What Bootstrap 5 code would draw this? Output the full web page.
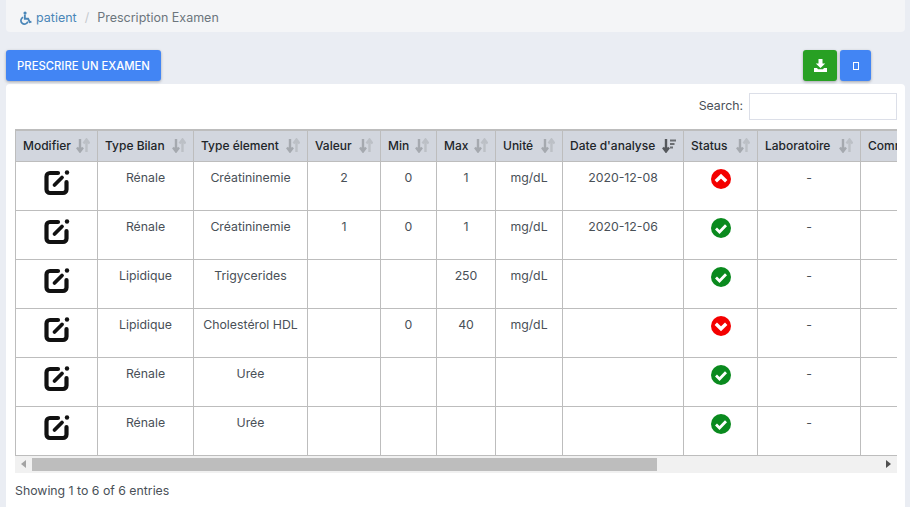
<!DOCTYPE html>
<html lang="fr">
<head>
  <meta charset="UTF-8">
  <meta name="viewport" content="width=device-width, initial-scale=1">
  <title>Prescription Examen</title>
  <link rel="stylesheet" href="https://cdn.jsdelivr.net/npm/bootstrap@5.3.0/dist/css/bootstrap.min.css">
  <style>
    html, body { height: 507px; overflow: hidden; }
    body {
      font-family: "Inter", "Liberation Sans", sans-serif;
      font-size: 12.3px;
      color: #495057;
      background-color: #eaedf3;
      padding: 0 5px 0 6px;
    }
    .crumbs {
      background-color: #f4f5f7;
      height: 32px;
      border-radius: 0 0 4px 4px;
      padding: 4px 13px 0;
      margin: 0 0 18px 0;
      font-size: 12.5px;
      align-items: center;
    }
    .crumbs .breadcrumb-item a { color: #4a86b8; text-decoration: none; }
    .crumbs .breadcrumb-item.active { color: #6c757d; }
    .crumbs .breadcrumb-item + .breadcrumb-item::before { color: #c5c9ce; }
    .tools { height: 34px; padding-right: 34px; }
    .tool-btn {
      height: 31px;
      border: 0;
      border-radius: 3px;
      font-size: 11.3px;
      font-weight: 500;
      color: #fff;
      box-shadow: 0 1px 3px rgba(0,0,0,.3);
      display: flex;
      align-items: center;
      justify-content: center;
    }
    .btn-prescrire { width: 155px; background-color: #4285f4; margin-right: auto; padding: 1px 0 0; }
    .btn-dl { width: 34px; background-color: #28a023; margin-right: 3px; padding: 0; }
    .btn-blank { width: 31px; background-color: #4285f4; padding: 0; }
    .panel {
      background-color: #fff;
      border-radius: 4px 4px 0 0;
      height: 423px;
      padding: 9px 8px 0 9px;
    }
    .search-row { margin-bottom: 9px; }
    .search-row label { color: #495057; margin-right: 6px; }
    .search-row input {
      width: 148px;
      height: 27px;
      border: 1px solid #dcdfe8;
      outline: 0;
    }
    .scroll-wrap { overflow: hidden; width: 882px; }
    .exam-table {
      table-layout: fixed;
      width: 960px;
      border-collapse: collapse;
      margin: 0;
    }
    .exam-table th, .exam-table td {
      border: 1px solid #bdbdbd;
      text-align: center;
      vertical-align: top;
      padding: 0;
      white-space: nowrap;
      overflow: hidden;
    }
    .exam-table thead th {
      height: 31px;
      background-color: #d2d6de;
      color: #212529;
      font-weight: 500;
      font-size: 12px;
      vertical-align: middle;
      text-align: left;
      padding-left: 7px;
      border-top: 2px solid #bdbdbd;
    }
    .exam-table tbody td { height: 49px; padding-top: 7px; color: #495057; }
    .exam-table .cell-edit { padding-top: 6px; }
    .exam-table .cell-status { padding-top: 7px; }
    .head-inner { display: flex; align-items: center; justify-content: space-between; padding-right: 7px; }
    .c1 { width: 82px; } .c2 { width: 96px; } .c3 { width: 114px; } .c4 { width: 73px; }
    .c5 { width: 56px; } .c6 { width: 59px; } .c7 { width: 67px; } .c8 { width: 121px; }
    .c9 { width: 74px; } .c10 { width: 103px; } .c11 { width: 115px; }
    .fake-scroll { height: 17px; background-color: #f1f1f1; width: 882px; }
    .arrow-l, .arrow-r { width: 17px; height: 17px; flex: none; display: flex; align-items: center; justify-content: center; }
    .thumb { width: 625px; height: 13px; background-color: #bdbdbd; }
    .info { margin-top: 9px; color: #495057; }
  </style>
</head>
<body>
  <svg width="0" height="0" class="d-none">
    <symbol id="ic-edit" viewBox="0 0 28 28">
      <path d="M15 5H7a3.500 3.500 0 0 0-3.500 3.500v13A3.500 3.500 0 0 0 7 25h13a3.500 3.500 0 0 0 3.500-3.500V14" fill="none" stroke="#111" stroke-width="4.200" stroke-linecap="round"/>
      <path d="M11.500 17 19 9.500" fill="none" stroke="#111" stroke-width="3.800" stroke-linecap="round"/>
      <circle cx="24" cy="4.500" r="2.200" fill="#111"/>
    </symbol>
    <symbol id="ic-ok" viewBox="0 0 20 20">
      <circle cx="10" cy="10" r="10" fill="#0a8a1e"/>
      <path d="M5 10.500l3.500 3.500L15 7.200" fill="none" stroke="#fff" stroke-width="2.800"/>
    </symbol>
    <symbol id="ic-up" viewBox="0 0 20 20">
      <circle cx="10" cy="10" r="10" fill="#f40000"/>
      <path d="M4.800 12.200 10 7.200l5.200 5" fill="none" stroke="#fff" stroke-width="3.400"/>
    </symbol>
    <symbol id="ic-down" viewBox="0 0 20 20">
      <circle cx="10" cy="10" r="10" fill="#f40000"/>
      <path d="M4.800 7.800 10 12.800l5.200-5" fill="none" stroke="#fff" stroke-width="3.400"/>
    </symbol>
    <symbol id="ic-sort" viewBox="0 0 14 15">
      <path d="M4 1v12M1 9.500 4 13.500 7 9.500" fill="none" stroke="#a5a9af" stroke-width="2.400"/>
      <path d="M10.500 14V2M7.500 5.500 10.500 1.500 13.500 5.500" fill="none" stroke="#bcc0c6" stroke-width="2.400"/>
    </symbol>
    <symbol id="ic-sort-desc" viewBox="0 0 14 15">
      <path d="M4 1v12M1 9.500 4 13.500 7 9.500" fill="none" stroke="#55585c" stroke-width="2.400"/>
      <path d="M8 2.500h6M8 6h4.500M8 9.500h3" fill="none" stroke="#6b6e72" stroke-width="2"/>
    </symbol>
  </svg>

  <nav aria-label="breadcrumb">
    <ol class="breadcrumb crumbs">
      <li class="breadcrumb-item d-flex align-items-center gap-1">
        <svg width="13" height="14" viewBox="0 0 14 14"><circle cx="6.500" cy="1.700" r="1.700" fill="#4a86b8"/><path d="M6.300 3.500v4.300h3.500l1.800 3.700 1.800-.6" fill="none" stroke="#4a86b8" stroke-width="2"/><path d="M4.500 6.200a3.800 3.800 0 1 0 5 4.700" fill="none" stroke="#4a86b8" stroke-width="1.800"/></svg>
        <a href="#">patient</a>
      </li>
      <li class="breadcrumb-item active" aria-current="page">Prescription Examen</li>
    </ol>
  </nav>

  <div class="d-flex tools">
    <button class="btn tool-btn btn-prescrire" type="button">PRESCRIRE UN EXAMEN</button>
    <button class="btn tool-btn btn-dl" type="button" aria-label="Télécharger">
      <svg width="13" height="13" viewBox="0 0 13 13"><path d="M4.500 0h4v4.500h2.700L6.500 9 1.800 4.500h2.700z" fill="#fff"/><path d="M0 9h3l1 1.300h5L10 9h3v4H0z" fill="#fff"/></svg>
    </button>
    <button class="btn tool-btn btn-blank" type="button" aria-label="Action">
      <svg width="6" height="8" viewBox="0 0 6 8"><rect x=".5" y=".5" width="5" height="7" fill="none" stroke="#fff"/></svg>
    </button>
  </div>

  <div class="panel">
    <div class="d-flex justify-content-end align-items-center search-row">
      <label for="search">Search:</label>
      <input id="search" type="search">
    </div>
    <div class="scroll-wrap">
      <table class="exam-table">
        <colgroup>
          <col class="c1"><col class="c2"><col class="c3"><col class="c4"><col class="c5"><col class="c6">
          <col class="c7"><col class="c8"><col class="c9"><col class="c10"><col class="c11">
        </colgroup>
        <thead id="head"></thead>
        <tbody id="rows"></tbody>
      </table>
    </div>
    <div class="d-flex align-items-center fake-scroll">
      <span class="arrow-l"><svg width="5" height="8" viewBox="0 0 5 8"><path d="M5 0v8L0 4z" fill="#a3a3a3"/></svg></span>
      <div class="thumb"></div>
      <span class="arrow-r ms-auto"><svg width="5" height="8" viewBox="0 0 5 8"><path d="M0 0v8l5-4z" fill="#505050"/></svg></span>
    </div>
    <div class="info">Showing 1 to 6 of 6 entries</div>
  </div>

  <script>
    var heads = ['Modifier', 'Type Bilan', 'Type élement', 'Valeur', 'Min', 'Max', 'Unité', "Date d'analyse", 'Status', 'Laboratoire', 'Commentaire'];
    var data = [
      ['Rénale', 'Créatininemie', '2', '0', '1', 'mg/dL', '2020-12-08', 'up'],
      ['Rénale', 'Créatininemie', '1', '0', '1', 'mg/dL', '2020-12-06', 'ok'],
      ['Lipidique', 'Trigycerides', '', '', '250', 'mg/dL', '', 'ok'],
      ['Lipidique', 'Cholestérol HDL', '', '0', '40', 'mg/dL', '', 'down'],
      ['Rénale', 'Urée', '', '', '', '', '', 'ok'],
      ['Rénale', 'Urée', '', '', '', '', '', 'ok']
    ];
    document.getElementById('head').innerHTML = '<tr>' + heads.map(function (h, i) {
      var icon = i === 7 ? 'ic-sort-desc' : 'ic-sort';
      var sort = i === 10 ? '' : '<svg width="14" height="15"><use href="#' + icon + '"/></svg>';
      return '<th><div class="head-inner"><span>' + h + '</span>' + sort + '</div></th>';
    }).join('') + '</tr>';
    document.getElementById('rows').innerHTML = data.map(function (r) {
      var cells = r.slice(0, 7).map(function (c) { return '<td>' + c + '</td>'; }).join('');
      return '<tr><td class="cell-edit"><svg width="28" height="28"><use href="#ic-edit"/></svg></td>' + cells +
        '<td class="cell-status"><svg width="20" height="20"><use href="#ic-' + r[7] + '"/></svg></td><td>-</td><td></td></tr>';
    }).join('');
  </script>
  <script src="https://cdn.jsdelivr.net/npm/bootstrap@5.3.0/dist/js/bootstrap.bundle.min.js"></script>
</body>
</html>
